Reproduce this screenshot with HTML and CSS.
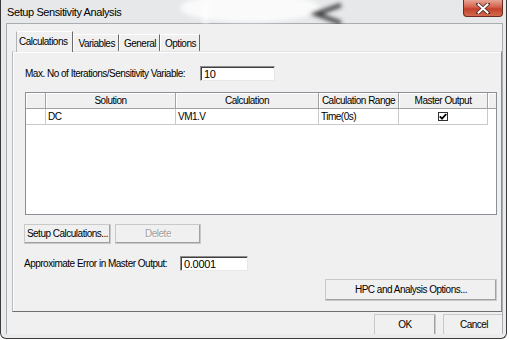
FILE: index.html
```html
<!DOCTYPE html>
<html>
<head>
<meta charset="utf-8">
<link rel="stylesheet" href="styles.css">
</head>
<body>
<div class="window">
  <div class="titlebar">
    <svg class="glass" width="509" height="24" viewBox="0 0 509 24">
      <defs><filter id="b" x="-50%" y="-50%" width="200%" height="200%"><feGaussianBlur stdDeviation="2.2"/></filter></defs>
      <ellipse cx="250" cy="8" rx="70" ry="14" fill="#ffffff" opacity="0.8" filter="url(#b)"/>
      <polyline points="341,5 316,14 341,23" fill="none" stroke="#3a3a3a" stroke-width="4" filter="url(#b)"/>
      <rect x="203" y="0" width="5" height="24" fill="#ffffff" opacity="0.7" filter="url(#b)"/>
    </svg>
    <span class="title">Setup Sensitivity Analysis</span>
    <div class="close">
      <svg width="14" height="11" viewBox="0 0 14 11"><path d="M2 1 L12 10 M12 1 L2 10" stroke="#4a2a24" stroke-width="3.6" stroke-linecap="square"/><path d="M2.5 1.5 L11.5 9.5 M11.5 1.5 L2.5 9.5" stroke="#ffffff" stroke-width="2" stroke-linecap="square"/></svg>
    </div>
  </div>
  <div class="client">
    <div class="tabstrip">
      <div class="tab active">Calculations</div>
      <div class="tab">Variables</div>
      <div class="tab">General</div>
      <div class="tab">Options</div>
    </div>
    <div class="panel">
      <div class="field-row">
        <span class="label l175">Max. No of Iterations/Sensitivity Variable:</span>
        <div class="input w75">10</div>
      </div>
      <div class="grid">
        <div class="hc first"></div>
        <div class="hc">Solution</div>
        <div class="hc">Calculation</div>
        <div class="hc">Calculation Range</div>
        <div class="hc">Master Output</div>
        <div class="hc last"></div>
        <div class="dc first"></div>
        <div class="dc">DC</div>
        <div class="dc">VM1.V</div>
        <div class="dc">Time(0s)</div>
        <div class="dc center"><span class="check"><svg width="8" height="7" viewBox="0 0 8 7"><path d="M0.8 3.4 L3 5.6 L7.3 1" fill="none" stroke="#000" stroke-width="1.8"/></svg></span></div>
        <div class="dc blank"></div>
      </div>
      <div class="btn-row">
        <div class="btn w87">Setup Calculations...</div>
        <div class="btn w86 disabled">Delete</div>
      </div>
      <div class="field-row err">
        <span class="label l156">Approximate Error in Master Output:</span>
        <div class="input w68">0.0001</div>
      </div>
      <div class="hpc-row">
        <div class="btn hpc">HPC and Analysis Options...</div>
      </div>
    </div>
    <div class="footer">
      <div class="btn ok">OK</div>
      <div class="btn cancel">Cancel</div>
    </div>
  </div>
</div>
</body>
</html>
```

FILE: styles.css
```css
html, body {
  margin: 0;
  padding: 0;
  background: #ffffff;
}
body {
  width: 509px;
  height: 340px;
  overflow: hidden;
  font-family: "Liberation Sans", Arial, sans-serif;
  font-size: 10px;
  letter-spacing: -0.5px;
  color: #000;
}
.window {
  position: relative;
  width: 507px;
  height: 339px;
  box-sizing: border-box;
  border: 1px solid #3b3b3b;
  border-top: none;
  border-radius: 0 0 6px 6px;
  background: linear-gradient(180deg, #e6e8ea 0%, #e9ebed 100%);
  display: flex;
  flex-direction: column;
  overflow: hidden;
}
.titlebar {
  position: relative;
  height: 23px;
  flex: none;
}
.glass {
  position: absolute;
  left: -1px;
  top: 0;
}
.title {
  position: relative;
  display: block;
  padding: 5px 0 0 6px;
  font-size: 11px;
  letter-spacing: -0.4px;
  line-height: 14px;
  color: #000;
}
.close {
  position: absolute;
  right: 3px;
  top: 0;
  width: 40px;
  height: 17px;
  box-sizing: border-box;
  border: 1px solid #6e2a1f;
  border-top: none;
  border-radius: 0 0 4px 4px;
  background: linear-gradient(180deg, #e7a596 0%, #d4604b 45%, #c2412c 55%, #d36a4f 100%);
  display: flex;
  align-items: center;
  justify-content: center;
}
.client {
  flex: none;
  margin: 0 3px 0 5px;
  height: 311px;
  box-sizing: border-box;
  border: 1px solid #a9acb0;
  border-bottom: none;
  background: #f0f0f0;
  padding: 7px 0 0 5px;
  overflow: hidden;
}
.tabstrip {
  display: flex;
  align-items: flex-end;
  height: 20px;
  padding-left: 4px;
  position: relative;
  z-index: 2;
}
.tab {
  height: 17px;
  box-sizing: border-box;
  padding: 3px 3px 0 4px;
  border-top: 1px solid #ffffff;
  border-left: 1px solid #ffffff;
  border-right: 1px solid #6a6a6a;
  background: #f0f0f0;
  line-height: 12px;
  white-space: nowrap;
}
.tab.active {
  height: 21px;
  margin-bottom: -1px;
  padding: 4px 5px 0 2px;
  border-left: 1px solid #b4b4b4;
}
.panel {
  width: 490px;
  height: 261px;
  box-sizing: border-box;
  border-top: 1px solid #e2e2e2;
  border-left: 1px solid #b8b8b8;
  border-right: 1px solid #8a8a8a;
  border-bottom: 1px solid #6e6e6e;
  box-shadow: inset 1px 1px 0 #ffffff;
  padding: 13px 4px 0 12px;
  display: flex;
  flex-direction: column;
}
.field-row {
  display: flex;
  align-items: center;
  height: 16px;
}
.field-row .label {
  white-space: nowrap;
  flex: none;
}
.l175 { width: 175px; }
.l156 { width: 156px; }
.input {
  height: 15px;
  box-sizing: border-box;
  border-top: 1px solid #8e8e8e;
  border-left: 1px solid #8e8e8e;
  border-right: 1px solid #e8e8e8;
  border-bottom: 1px solid #e8e8e8;
  box-shadow: inset 1px 1px 0 #404040;
  background: #fff;
  padding: 1px 0 0 3px;
  line-height: 12px;
  font-size: 11px;
  letter-spacing: -0.3px;
}
.w75 { width: 75px; }
.w68 { width: 68px; }
.grid {
  margin-top: 11px;
  width: 472px;
  height: 123px;
  box-sizing: border-box;
  border: 1px solid #8b8f96;
  background: #ffffff;
  display: grid;
  grid-template-columns: 20px 130px 143px 80px 89px 1fr;
  grid-template-rows: 16px 16px;
  align-content: start;
}
.hc {
  background: #f0f0f0;
  border-right: 1px solid #a3a3a3;
  border-bottom: 1px solid #a3a3a3;
  box-shadow: inset 1px 1px 0 #ffffff;
  text-align: center;
  line-height: 15px;
  white-space: nowrap;
  overflow: hidden;
}
.hc.last {
  border-right: none;
}
.dc {
  border-right: 1px solid #c9c9c9;
  border-bottom: 1px solid #c9c9c9;
  padding-left: 2px;
  line-height: 15px;
  white-space: nowrap;
  overflow: hidden;
}
.dc.first { padding-left: 0; }
.dc.blank { border-right: none; border-bottom: none; }
.dc.center {
  display: flex;
  align-items: center;
  justify-content: center;
  padding-left: 0;
}
.check {
  width: 10px;
  height: 9px;
  box-sizing: border-box;
  border: 1px solid #303030;
  background: #fff;
  display: flex;
  align-items: center;
  justify-content: center;
}
.check svg { display: block; }
.btn-row {
  display: flex;
  gap: 4px;
  margin-top: 9px;
  margin-left: -1px;
}
.btn {
  height: 20px;
  box-sizing: border-box;
  border-top: 1px solid #ffffff;
  border-left: 1px solid #ffffff;
  border-right: 1px solid #696969;
  border-bottom: 1px solid #696969;
  box-shadow: inset -1px -1px 0 #a0a0a0;
  outline: 1px solid #c9c9c9;
  outline-offset: -1px;
  background: #f0f0f0;
  text-align: center;
  line-height: 18px;
  white-space: nowrap;
}
.btn.w87 { width: 87px; }
.btn.w86 { width: 86px; }
.btn.disabled { color: #a0a0a0; text-shadow: 1px 1px 0 #fff; }
.field-row.err {
  margin-top: 11px;
  margin-left: -1px;
}
.hpc-row {
  display: flex;
  justify-content: flex-end;
  margin-top: 8px;
}
.btn.hpc {
  width: 172px;
  height: 22px;
  line-height: 20px;
}
.footer {
  display: flex;
  justify-content: flex-end;
  gap: 7px;
  margin-top: 2px;
  margin-right: -3px;
}
.btn.ok { width: 62px; height: 22px; line-height: 20px; }
.btn.cancel { width: 62px; height: 22px; line-height: 20px; }
```
